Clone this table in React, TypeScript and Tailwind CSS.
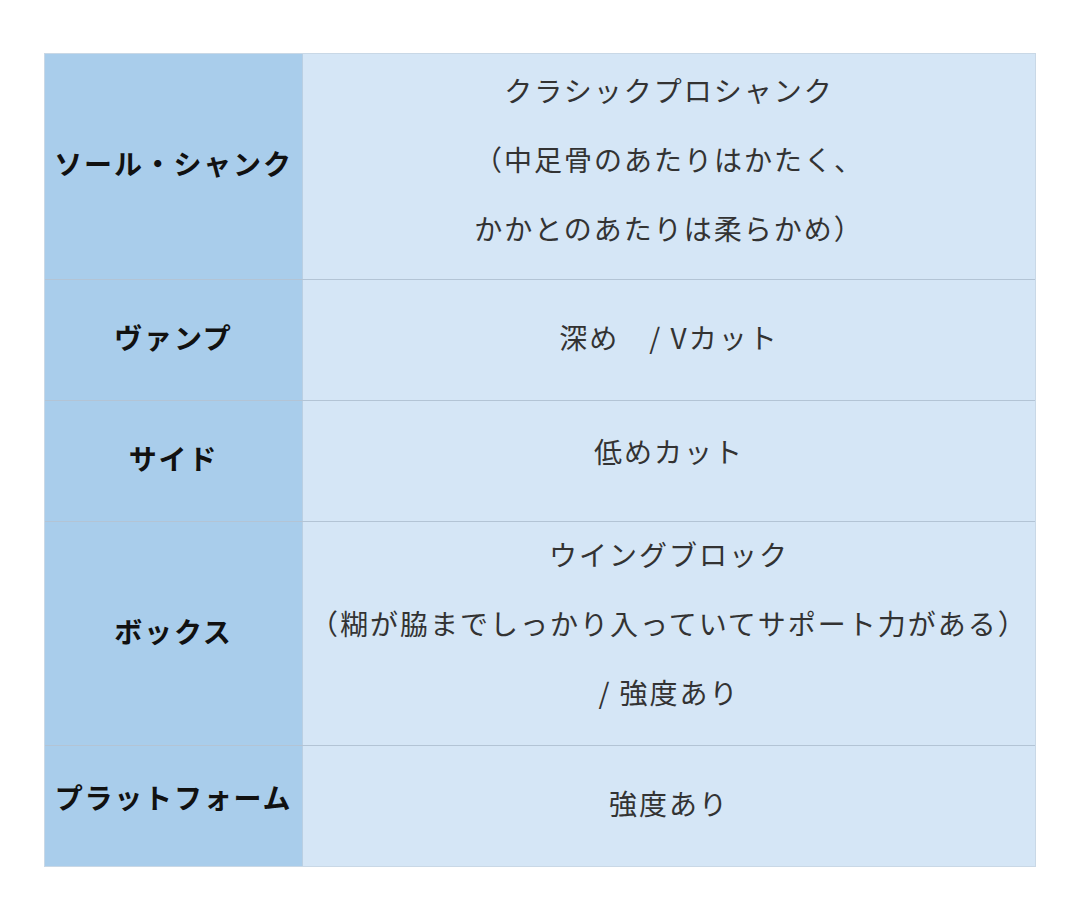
import React from "react";

type Row = { label: string; lines: string[]; h: string; pad: string; lpad: string };

const rows: Row[] = [
  {
    label: "ソール・シャンク",
    lines: ["クラシックプロシャンク", "（中足骨のあたりはかたく、", "かかとのあたりは柔らかめ）"],
    h: "h-[225px]",
    pad: "pb-[14px]",
    lpad: "pb-[8px]",
  },
  { label: "ヴァンプ", lines: ["深め　/ Vカット"], h: "h-[121px]", pad: "pb-[6px]", lpad: "pb-[6px]" },
  { label: "サイド", lines: ["低めカット"], h: "h-[121px]", pad: "pb-[20px]", lpad: "pb-[6px]" },
  {
    label: "ボックス",
    lines: ["ウイングブロック", "（糊が脇までしっかり入っていてサポート力がある）", "/ 強度あり"],
    h: "h-[224px]",
    pad: "pb-[20px]",
    lpad: "pb-[6px]",
  },
  { label: "プラットフォーム", lines: ["強度あり"], h: "h-[121px]", pad: "pb-[6px]", lpad: "pb-[18px]" },
];

export default function App() {
  return (
    <div
      className="w-[1080px] h-[910px] bg-white pt-[53px] pl-[44px]"
      style={{ fontFamily: '"Noto Sans CJK JP", "Noto Sans", sans-serif' }}
    >
      <div className="w-[992px] flex flex-col border border-[#c9d8e6]">
        {rows.map((r, i) => (
          <div
            key={i}
            className={`flex ${r.h} ${i > 0 ? "border-t border-[#b3c4d5]" : ""}`}
          >
            <div className={`w-[258px] shrink-0 bg-[#a9cdeb] border-r border-[#b9cfe3] flex items-center justify-center ${r.lpad}`}>
              <span className="text-[28px] font-bold text-[#111111] leading-none tracking-[1.8px]">{r.label}</span>
            </div>
            <div className={`flex-1 bg-[#d5e6f6] flex flex-col items-center justify-center ${r.pad}`}>
              {r.lines.map((l, j) => (
                <div key={j} className="text-[28px] leading-[69px] text-[#333333] tracking-[2px]">
                  {l}
                </div>
              ))}
            </div>
          </div>
        ))}
      </div>
    </div>
  );
}
